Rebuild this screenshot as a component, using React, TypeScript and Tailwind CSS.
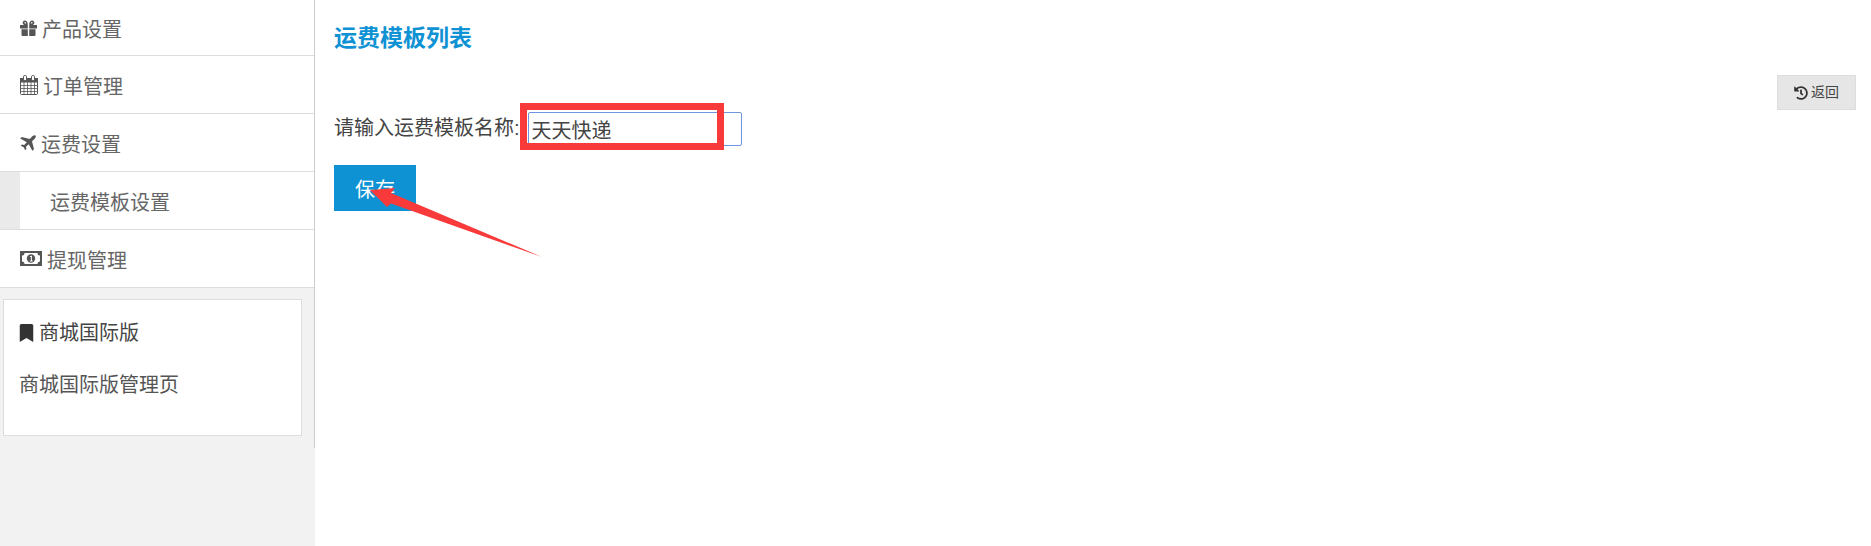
import type { ReactNode } from "react";
import { FaBookmark, FaHistory } from "react-icons/fa";

const cjk = "font-['Liberation_Sans','Noto_Sans_CJK_SC',sans-serif]";

function GiftIcon() {
  return (
    <svg viewBox="0 0 17 16" className="h-[16px] w-[17px] fill-[#555555]">
      <path d="M5 0.500a2.300 2.300 0 0 0-1 4.400h3.700V3.400C7.500 1.600 6 0.500 5 0.500ZM5 2a1 1 0 0 1 1 1.500H5A.8.8 0 0 1 5 2Z" />
      <path d="M12 0.500a2.300 2.300 0 0 1 1 4.400H9.300V3.400C9.500 1.600 11 .5 12 .5ZM12 2a1 1 0 0 0-1 1.500h1A.8.8 0 0 0 12 2Z" />
      <path d="M0 5h7.800v3.500H0ZM9.200 5H17v3.500H9.200ZM1.500 9.200h6.300V16H2.500a1 1 0 0 1-1-1ZM9.200 9.200h6.300V15a1 1 0 0 1-1 1H9.200Z" />
    </svg>
  );
}

function CalendarIcon() {
  return (
    <svg viewBox="0 0 18 20" className="h-[20px] w-[18px] fill-none stroke-[#555555]">
      <rect x="0.500" y="3.500" width="17" height="16" rx="1" />
      <rect x="0.500" y="3.500" width="17" height="3.500" className="fill-[#555555]" />
      <path d="M0.500 10.500h17M0.500 13.500h17M0.500 16.500h17M4 7v12.500M7.500 7v12.500M11 7v12.500M14.500 7v12.500" strokeWidth="0.800" />
      <rect x="3.500" y="0.500" width="3" height="5" rx="1.200" className="fill-white" />
      <rect x="11.500" y="0.500" width="3" height="5" rx="1.200" className="fill-white" />
    </svg>
  );
}

function PlaneIcon() {
  return (
    <svg viewBox="0 0 16 16" className="h-[16px] w-[16px] fill-[#555555]">
      <path d="M15.500.5c.8 1.200-.2 2.600-1.500 3.900L12 6.300l2 8-1.600 1.400-3.700-6.500L6 11.800l.4 2.300-1.200 1.200-1.500-3-3-1.500 1.200-1.200 2.300.4 2.600-2.700L.3 3.600 1.700 2l8 2L11.600 2C12.900.7 14.300-.3 15.500.5Z" />
    </svg>
  );
}

function MoneyIcon() {
  return (
    <svg viewBox="0 0 22 15" className="h-[15px] w-[22px]">
      <rect x="0" y="0" width="22" height="15" fill="#555555" />
      <path d="M4.500 2h13a2.500 2.500 0 0 0 2.500 2.500v6A2.500 2.500 0 0 0 17.500 13h-13A2.500 2.500 0 0 0 2 10.500v-6A2.500 2.500 0 0 0 4.500 2Z" fill="#ffffff" />
      <circle cx="11" cy="7.500" r="4.200" fill="#555555" />
      <path d="M10 5.800l1.400-.8v5M9.800 10h2.800" fill="none" stroke="#ffffff" strokeWidth="1" />
    </svg>
  );
}

function MenuRow({ children, icon, gap, height = "h-[58px]" }: { children: ReactNode; icon: ReactNode; gap: string; height?: string }) {
  return (
    <div className={`flex items-center border-b border-[#dddddd] bg-white pl-[20px] text-[20px] text-[#666666] ${gap} ${height}`}>
      {icon}
      <span className="pt-[4px]">{children}</span>
    </div>
  );
}

export default function App() {
  return (
    <div className={`relative flex h-[546px] overflow-hidden bg-white ${cjk}`}>
      <aside className="w-[315px] shrink-0 bg-[#f2f2f2]">
        <div className="h-[448px] border-r border-[#cccccc]">
          <MenuRow icon={<GiftIcon />} gap="gap-[5px]" height="h-[56px]">
            产品设置
          </MenuRow>
          <MenuRow icon={<CalendarIcon />} gap="gap-[5px]">
            订单管理
          </MenuRow>
          <MenuRow icon={<PlaneIcon />} gap="gap-[5px]">
            运费设置
          </MenuRow>
          <div className="flex h-[58px] border-b border-[#dddddd] bg-white text-[20px] text-[#666666]">
            <div className="w-[20px] bg-[#eaeaea]" />
            <span className="ml-[30px] self-center pt-[4px]">运费模板设置</span>
          </div>
          <MenuRow icon={<MoneyIcon />} gap="gap-[5px]">
            提现管理
          </MenuRow>
          <div className="ml-[3px] mt-[11px] h-[137px] w-[299px] border border-[#dddddd] bg-white px-[15px] pt-[18px] text-[20px] text-[#444444]">
            <div className="flex items-center gap-[5px]">
              <FaBookmark className="h-[18px] w-[15px] text-[#333333]" />
              <span>商城国际版</span>
            </div>
            <div className="mt-[22px] text-[#555555]">商城国际版管理页</div>
          </div>
        </div>
      </aside>

      <main className="min-w-0 flex-1 pl-[19px] pr-[15px] pt-[21px]">
        <h2 className="pt-[1px] text-[23px] leading-[32px] font-bold text-[#0f92d4]">运费模板列表</h2>
        <div className="flex justify-end pt-[21px]">
          <button className="flex h-[35px] w-[79px] items-center justify-center gap-[3px] border border-[#dddddd] bg-[#e6e6e6] text-[14px] text-[#444444]">
            <FaHistory className="h-[14px] w-[14px] text-[#333333]" />
            返回
          </button>
        </div>
        <div className="mt-[2px] flex items-center text-[20px] text-[#444444]">
          <label className="pb-[2px]">请输入运费模板名称:</label>
          <input
            readOnly
            value="天天快递"
            className="ml-[8px] h-[34px] w-[214px] rounded-[2px] border border-[#6f94e0] px-[3px] text-[20px] text-[#444444] outline-none"
          />
        </div>
        <button className="mt-[19px] h-[46px] w-[82px] bg-[#0f92d4] pt-[3px] text-[20px] text-white">保存</button>
      </main>

      {/* screenshot annotations */}
      <div className="absolute left-[520px] top-[103px] h-[47px] w-[204px] border-[7px] border-[#f93a3a]" />
      <svg className="absolute left-0 top-0 h-[546px] w-[1871px]" viewBox="0 0 1871 546">
        <polygon points="370,190 395,188 391,193 542,257 391,203.500 387,207" fill="#f93a3a" />
      </svg>
    </div>
  );
}
